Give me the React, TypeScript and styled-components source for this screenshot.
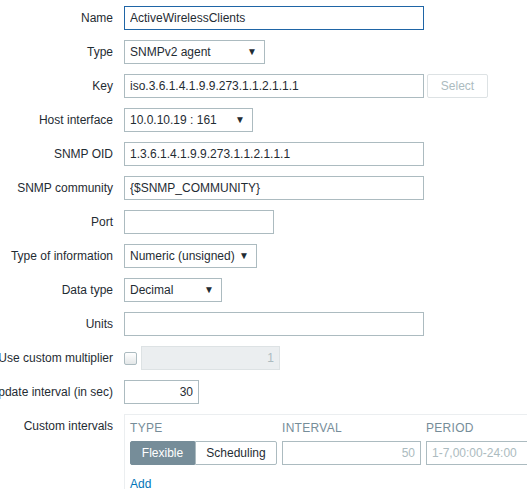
import React from 'react';
import styled, { createGlobalStyle } from 'styled-components';

const GlobalStyle = createGlobalStyle`
  html, body {
    margin: 0;
    padding: 0;
    background: #ffffff;
    overflow: hidden;
  }
  body {
    font-family: "Liberation Sans", Arial, sans-serif;
    font-size: 12px;
    color: #1f2c33;
  }
`;

const Form = styled.div`
  display: flex;
  flex-direction: column;
  gap: 10px;
  padding-top: 6px;
  width: 600px;
`;

const Row = styled.div<{ $top?: boolean }>`
  display: grid;
  grid-template-columns: 113px 1fr;
  column-gap: 11px;
  align-items: ${({ $top }) => ($top ? 'start' : 'center')};
  min-height: 24px;
`;

const Label = styled.label<{ $top?: boolean }>`
  display: flex;
  justify-content: flex-end;
  white-space: nowrap;
  line-height: 14px;
  padding-top: ${({ $top }) => ($top ? '5px' : '0')};
`;

const Field = styled.div`
  display: flex;
  align-items: center;
  gap: 3px;
`;

const TextInput = styled.input<{ $w: number; $focus?: boolean; $right?: boolean; $muted?: boolean }>`
  box-sizing: border-box;
  width: ${({ $w }) => $w}px;
  height: 24px;
  margin: 0;
  padding: 0 5px;
  font-family: inherit;
  font-size: 12px;
  color: ${({ $muted }) => ($muted ? '#acbbc0' : '#1f2c33')};
  background: #ffffff;
  border: 1px solid ${({ $focus }) => ($focus ? '#1f65a6' : '#acbbc0')};
  border-radius: 0;
  outline: none;
  text-align: ${({ $right }) => ($right ? 'right' : 'left')};

  &:disabled {
    background: #ebeef0;
    border-color: #dde2e4;
    color: #acbbc0;
  }
  &::placeholder {
    color: #acbbc0;
  }
`;

const SelectBox = styled.div<{ $w: number }>`
  box-sizing: border-box;
  width: ${({ $w }) => $w}px;
  height: 24px;
  padding: 0 7px 0 5px;
  display: flex;
  align-items: center;
  justify-content: space-between;
  border: 1px solid #acbbc0;
  background: #ffffff;
`;

const Arrow = styled.span`
  font-size: 10px;
  line-height: 1;
  color: #1f2c33;
`;

const GhostButton = styled.button`
  box-sizing: border-box;
  height: 24px;
  width: 61px;
  padding: 0;
  font-family: inherit;
  font-size: 12px;
  color: #acbbc0;
  background: #ffffff;
  border: 1px solid #dde2e4;
  border-radius: 2px;
`;

const Check = styled.span`
  box-sizing: border-box;
  width: 13px;
  height: 13px;
  margin-right: 1px;
  border: 1px solid #acbbc0;
  border-radius: 2px;
  background: linear-gradient(#ffffff, #e4e7e8);
`;

const IntervalBox = styled.div`
  border: 1px solid #ebeef0;
  border-right: none;
  padding: 5px 5px 0 5px;
  width: 420px;
`;

const IntervalGrid = styled.div`
  display: grid;
  grid-template-columns: 147px 139px 110px;
  column-gap: 5px;
`;

const HeadCell = styled.div`
  color: #768d99;
  text-transform: uppercase;
  letter-spacing: 0.3px;
  line-height: 16px;
  padding-bottom: 5px;
`;

const Toggle = styled.div`
  display: flex;
  height: 24px;
`;

const ToggleOption = styled.span<{ $on?: boolean }>`
  box-sizing: border-box;
  display: flex;
  align-items: center;
  justify-content: center;
  height: 24px;
  width: ${({ $on }) => ($on ? '65px' : '82px')};
  color: ${({ $on }) => ($on ? '#ffffff' : '#1f2c33')};
  background: ${({ $on }) => ($on ? '#768d99' : '#ffffff')};
  border: 1px solid ${({ $on }) => ($on ? '#768d99' : '#acbbc0')};
  border-radius: ${({ $on }) => ($on ? '2px 0 0 2px' : '0 2px 2px 0')};
`;

const AddLink = styled.a`
  display: inline-block;
  margin-top: 12px;
  color: #0275b8;
  line-height: 14px;
  text-decoration: none;
`;

const Select: React.FC<{ w: number; value: string }> = ({ w, value }) => (
  <SelectBox $w={w}>
    <span>{value}</span>
    <Arrow>▼</Arrow>
  </SelectBox>
);

export default function App() {
  return (
    <>
      <GlobalStyle />
      <Form>
        <Row>
          <Label>Name</Label>
          <Field>
            <TextInput $w={300} $focus defaultValue="ActiveWirelessClients" />
          </Field>
        </Row>
        <Row>
          <Label>Type</Label>
          <Field>
            <Select w={141} value="SNMPv2 agent" />
          </Field>
        </Row>
        <Row>
          <Label>Key</Label>
          <Field>
            <TextInput $w={300} defaultValue="iso.3.6.1.4.1.9.9.273.1.1.2.1.1.1" />
            <GhostButton disabled>Select</GhostButton>
          </Field>
        </Row>
        <Row>
          <Label>Host interface</Label>
          <Field>
            <Select w={129} value="10.0.10.19 : 161" />
          </Field>
        </Row>
        <Row>
          <Label>SNMP OID</Label>
          <Field>
            <TextInput $w={300} defaultValue="1.3.6.1.4.1.9.9.273.1.1.2.1.1.1" />
          </Field>
        </Row>
        <Row>
          <Label>SNMP community</Label>
          <Field>
            <TextInput $w={300} defaultValue="{$SNMP_COMMUNITY}" />
          </Field>
        </Row>
        <Row>
          <Label>Port</Label>
          <Field>
            <TextInput $w={150} defaultValue="" />
          </Field>
        </Row>
        <Row>
          <Label>Type of information</Label>
          <Field>
            <Select w={133} value="Numeric (unsigned)" />
          </Field>
        </Row>
        <Row>
          <Label>Data type</Label>
          <Field>
            <Select w={98} value="Decimal" />
          </Field>
        </Row>
        <Row>
          <Label>Units</Label>
          <Field>
            <TextInput $w={300} defaultValue="" />
          </Field>
        </Row>
        <Row>
          <Label>Use custom multiplier</Label>
          <Field>
            <Check />
            <TextInput $w={139} $right disabled defaultValue="1" />
          </Field>
        </Row>
        <Row>
          <Label>Update interval (in sec)</Label>
          <Field>
            <TextInput $w={75} $right defaultValue="30" />
          </Field>
        </Row>
        <Row $top>
          <Label $top>Custom intervals</Label>
          <IntervalBox>
            <IntervalGrid>
              <HeadCell>Type</HeadCell>
              <HeadCell>Interval</HeadCell>
              <HeadCell>Period</HeadCell>
              <Toggle>
                <ToggleOption $on>Flexible</ToggleOption>
                <ToggleOption>Scheduling</ToggleOption>
              </Toggle>
              <TextInput $w={139} $right $muted defaultValue="50" />
              <TextInput $w={110} placeholder="1-7,00:00-24:00" />
            </IntervalGrid>
            <AddLink href="#">Add</AddLink>
          </IntervalBox>
        </Row>
      </Form>
    </>
  );
}
